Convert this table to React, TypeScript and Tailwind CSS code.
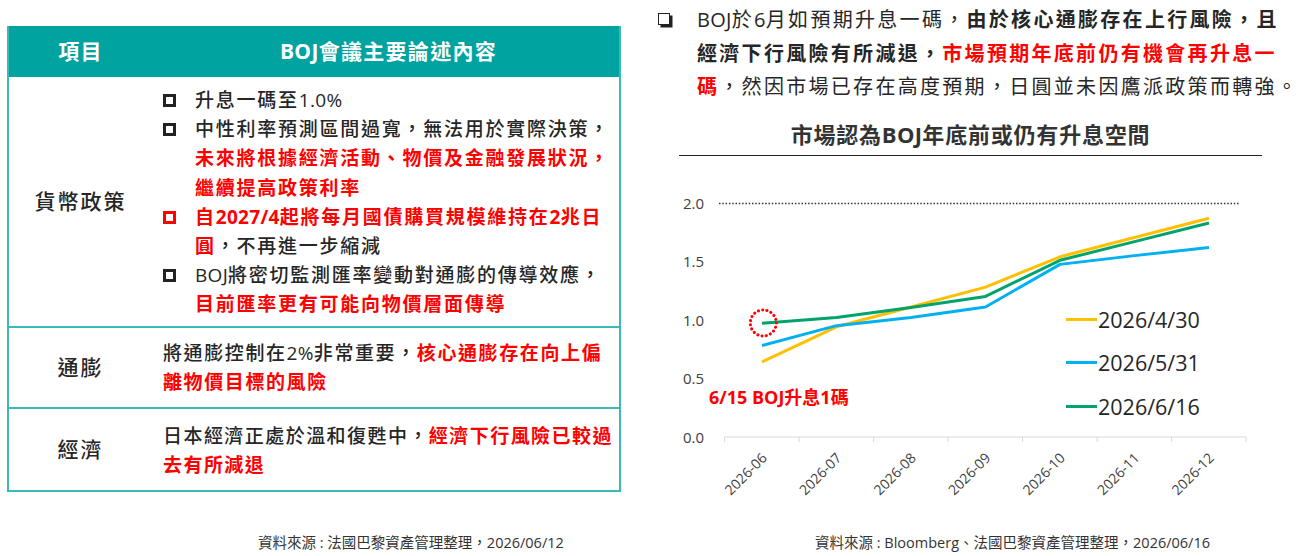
import React from "react";

const FONT = { fontFamily: '"Open Sans", "Noto Sans CJK TC", sans-serif' };
const RED = "text-[#ff0000]";

const cats = ["2026-06", "2026-07", "2026-08", "2026-09", "2026-10", "2026-11", "2026-12"];

const series = [
  { name: "2026/4/30", color: "#ffc000", data: [0.64, 0.94, 1.11, 1.28, 1.54, 1.705, 1.87], ly: 319.5 },
  { name: "2026/5/31", color: "#00b0f0", data: [0.78, 0.95, 1.02, 1.11, 1.475, 1.55, 1.62], ly: 362.5 },
  { name: "2026/6/16", color: "#00a36c", data: [0.97, 1.02, 1.105, 1.2, 1.51, 1.67, 1.83], ly: 406.5 },
];

const cx = (k: number) => 762 + 74.5 * k;
const yv = (v: number) => 436.5 - v * 116.7;

// latin runs inside spaced CJK text
function L({ children }: { children: React.ReactNode }) {
  return <span className="tracking-[0.3px]">{children}</span>;
}

function Box({ red }: { red?: boolean }) {
  return (
    <div className="w-[32px] shrink-0 pt-[8px]">
      <div className={`w-[13px] h-[13px] border-[3px] ${red ? "border-[#ff0000]" : "border-[#222]"}`} />
    </div>
  );
}

function Chart() {
  return (
    <svg width={656} height={370} viewBox="650 160 656 370" style={FONT}>
      {[0, 0.5, 1, 1.5, 2].map((v) => (
        <text key={v} x={704} y={yv(v)} textAnchor="end" dominantBaseline="central" fontSize={15} fill="#404040">
          {v.toFixed(1)}
        </text>
      ))}
      <line x1={719} x2={1240} y1={203.5} y2={203.5} stroke="#333" strokeWidth={1.5} strokeDasharray="1.5 1.8" />
      <line x1={724.6} x2={1246} y1={437} y2={437} stroke="#d9d9d9" strokeWidth={1} />
      {Array.from({ length: 8 }).map((_, k) => (
        <line key={k} x1={724.6 + 74.5 * k} x2={724.6 + 74.5 * k} y1={437} y2={442} stroke="#d9d9d9" strokeWidth={1} />
      ))}
      {cats.map((c, k) => (
        <text
          key={c}
          x={cx(k) + 2}
          y={455}
          textAnchor="end"
          dominantBaseline="central"
          fontSize={14}
          fill="#404040"
          transform={`rotate(-45 ${cx(k) + 2} 455)`}
        >
          {c}
        </text>
      ))}
      {series.map((s) => (
        <polyline
          key={s.name}
          points={s.data.map((v, k) => `${cx(k)},${yv(v)}`).join(" ")}
          fill="none"
          stroke={s.color}
          strokeWidth={3}
          strokeLinejoin="round"
        />
      ))}
      <circle cx={763.3} cy={323} r={13} fill="none" stroke="#ff0000" strokeWidth={3} strokeDasharray="0.1 4.2" strokeLinecap="round" />
      <text x={709} y={397} dominantBaseline="central" fontSize={18} fontWeight={700} fill="#ff0000">
        6/15 BOJ升息1碼
      </text>
      {series.map((s) => (
        <g key={s.name + "l"}>
          <line x1={1066} x2={1097} y1={s.ly} y2={s.ly} stroke={s.color} strokeWidth={3} />
          <text x={1098} y={s.ly} dominantBaseline="central" fontSize={21.5} fill="#262626">
            {s.name}
          </text>
        </g>
      ))}
    </svg>
  );
}

export default function App() {
  return (
    <div className="w-[1306px] h-[556px] bg-white flex text-[#262626]" style={FONT}>
      {/* left: table */}
      <div className="w-[650px] shrink-0 pl-[7px] pt-[26px] flex flex-col">
        <div className="w-[614px] border-x-2 border-b-2 border-[#3db8b8]">
          <div className="flex h-[51px] bg-[#00a3a0] text-white font-bold text-[21px] tracking-[1.3px]">
            <div className="w-[143px] flex items-center justify-center">項目</div>
            <div className="flex-1 flex items-center justify-center pl-[6px]">
              <L>BOJ</L>會議主要論述內容
            </div>
          </div>

          <div className="flex h-[249px]">
            <div className="w-[143px] flex items-center justify-center text-[21px] tracking-[2px] font-medium">貨幣政策</div>
            <div className="flex-1 pl-[11px] pt-[9px] text-[19px] tracking-[1.75px] leading-[29.2px] font-medium whitespace-nowrap">
              <div className="flex">
                <Box />
                <div>
                  升息一碼至<L>1.0%</L>
                </div>
              </div>
              <div className="flex">
                <Box />
                <div>
                  <div>中性利率預測區間過寬，無法用於實際決策，</div>
                  <div className={`${RED} font-bold`}>未來將根據經濟活動、物價及金融發展狀況，</div>
                  <div className={`${RED} font-bold`}>繼續提高政策利率</div>
                </div>
              </div>
              <div className="flex">
                <Box red />
                <div>
                  <div className={`${RED} font-bold`}>
                    自<L>2027/4</L>起將每月國債購買規模維持在<L>2</L>兆日
                  </div>
                  <div>
                    <span className={`${RED} font-bold`}>圓</span>，不再進一步縮減
                  </div>
                </div>
              </div>
              <div className="flex">
                <Box />
                <div>
                  <div>
                    <L>BOJ</L>將密切監測匯率變動對通膨的傳導效應，
                  </div>
                  <div className={`${RED} font-bold`}>目前匯率更有可能向物價層面傳導</div>
                </div>
              </div>
            </div>
          </div>

          <div className="flex h-[81px] border-t-2 border-[#3db8b8]">
            <div className="w-[143px] flex items-center justify-center text-[21px] tracking-[2px] font-medium">通膨</div>
            <div className="flex-1 pl-[11px] pt-[11px] text-[19px] tracking-[1.6px] leading-[29.2px] font-medium whitespace-nowrap">
              <div>
                將通膨控制在<L>2%</L>非常重要，<span className={`${RED} font-bold`}>核心通膨存在向上偏</span>
              </div>
              <div className={`${RED} font-bold`}>離物價目標的風險</div>
            </div>
          </div>

          <div className="flex h-[83px] border-t-2 border-[#3db8b8]">
            <div className="w-[143px] flex items-center justify-center text-[21px] tracking-[2px] font-medium">經濟</div>
            <div className="flex-1 pl-[11px] pt-[13px] text-[19px] tracking-[1.45px] leading-[29.2px] font-medium whitespace-nowrap">
              <div>
                日本經濟正處於溫和復甦中，<span className={`${RED} font-bold`}>經濟下行風險已較過</span>
              </div>
              <div className={`${RED} font-bold`}>去有所減退</div>
            </div>
          </div>
        </div>

        <div className="mt-auto pb-[3px] pl-[251px] text-[14.5px] leading-[20px] text-[#333] whitespace-nowrap">
          資料來源 : 法國巴黎資產管理整理，2026/06/12
        </div>
      </div>

      {/* right: commentary + chart */}
      <div className="flex-1 flex flex-col">
        <div className="flex pl-[8px] pt-[3px] text-[20px] tracking-[2.3px] leading-[33.5px] whitespace-nowrap">
          <div className="w-[39px] shrink-0 pt-[10px]">
            <div className="w-[12px] h-[12px] border-[1.5px] border-[#222] shadow-[2.5px_2.5px_0_#222]" />
          </div>
          <div>
            <div>
              <L>BOJ</L>於<L>6</L>月如預期升息一碼，<span className="font-bold">由於核心通膨存在上行風險，且</span>
            </div>
            <div className="font-bold">
              經濟下行風險有所減退，<span className={RED}>市場預期年底前仍有機會再升息一</span>
            </div>
            <div>
              <span className={`${RED} font-bold`}>碼</span>，然因市場已存在高度預期，日圓並未因鷹派政策而轉強。
            </div>
          </div>
        </div>

        <div className="ml-[29px] w-[583px] mt-[16px] pb-[7px] border-b border-[#222] text-center text-[22px] leading-[28px] font-bold tracking-[0.8px] text-[#333]">
          市場認為<L>BOJ</L>年底前或仍有升息空間
        </div>

        <div className="mt-[4px]">
          <Chart />
        </div>

        <div className="mt-auto pb-[3px] pl-[165px] text-[14.5px] leading-[20px] text-[#333] whitespace-nowrap">
          資料來源 : Bloomberg、法國巴黎資產管理整理，2026/06/16
        </div>
      </div>
    </div>
  );
}
